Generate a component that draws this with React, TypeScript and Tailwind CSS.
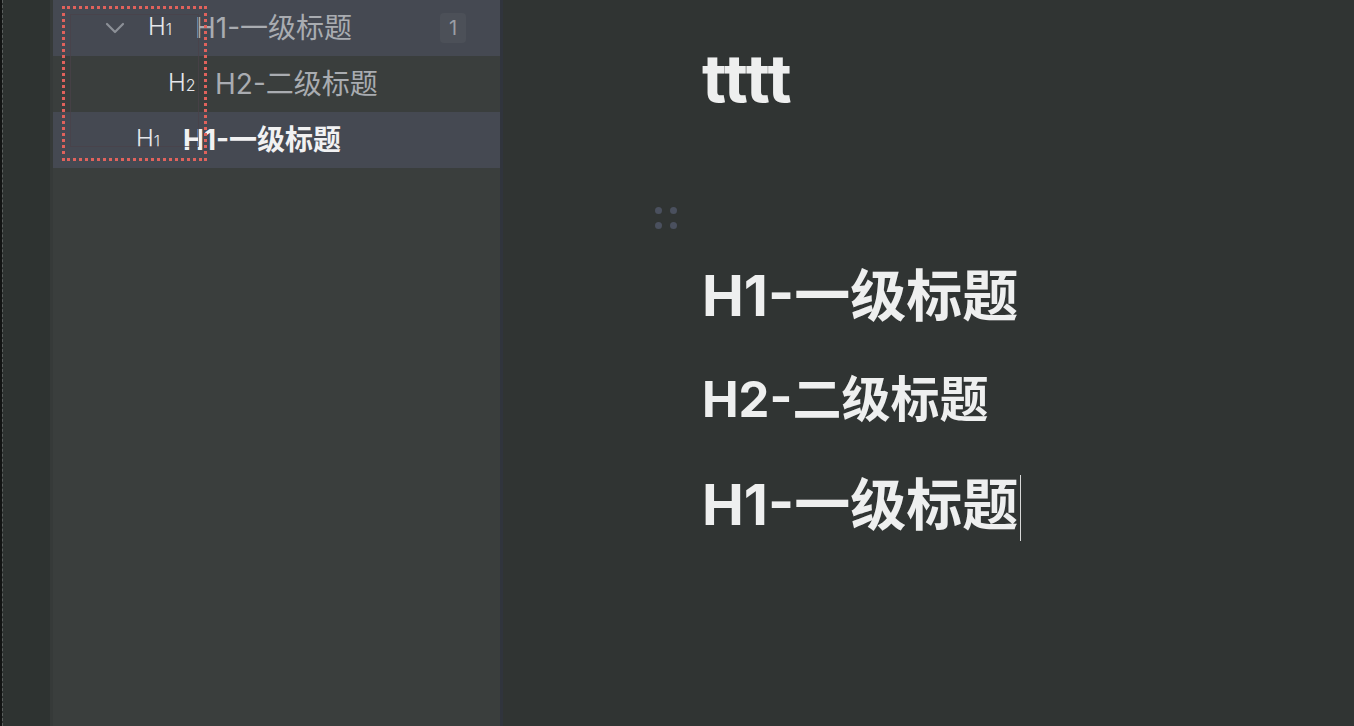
import React from "react";

const font = { fontFamily: 'Inter, "Noto Sans CJK SC", sans-serif' };

function Chevron() {
  return (
    <svg width="20" height="12" viewBox="0 0 20 12" fill="none" className="text-[#8c9097]">
      <path d="M2 2 L10 10 L18 2" stroke="currentColor" strokeWidth="2.2" strokeLinecap="round" strokeLinejoin="round" />
    </svg>
  );
}

function Level({ n }: { n: number }) {
  return (
    <span className="inline-flex items-baseline text-[#e6e7ea] font-light leading-none">
      <span className="text-[24px]">H</span>
      <span className="text-[16px]">{n}</span>
    </span>
  );
}

function OutlineRow({ level, label, pad, active, bold, caret, count }: any) {
  return (
    <div className={`flex items-center h-14 pr-[34px] ${active ? "bg-[#454952]" : ""}`}>
      <div className="flex items-center" style={{ paddingLeft: pad }}>
        {caret && (
          <span className="w-[43px] flex items-center">
            <Chevron />
          </span>
        )}
        <span className="w-[47px]">
          <Level n={level} />
        </span>
        <span className={`text-[28px] leading-none ${bold ? "font-bold text-[#f1f1f2]" : "text-[#a9acb1]"}`}>{label}</span>
      </div>
      {count && (
        <span className="ml-auto w-[26px] h-[30px] rounded bg-[#4c5058] flex items-center justify-center text-[20px] text-[#9a9ea5]">
          {count}
        </span>
      )}
    </div>
  );
}

export default function App() {
  return (
    <div className="flex h-[726px] w-full overflow-hidden bg-[#303433]" style={font}>
      <div className="w-[50px] flex shrink-0 bg-[#2e3331]">
        <div className="w-[2px] bg-[#121413]" />
        <div className="w-[3px] border-l border-dashed border-[#777b7a] opacity-60" />
      </div>

      <aside className="relative w-[453px] shrink-0 flex bg-[#3a3e3d] border-l-[3px] border-[#363a39]">
        <div className="flex-1 flex flex-col">
          <OutlineRow level={1} label="H1-一级标题" pad={52} active caret count="1" />
          <OutlineRow level={2} label="H2-二级标题" pad={115} />
          <OutlineRow level={1} label="H1-一级标题" pad={83} active bold />
        </div>
        <div className="w-[3px] bg-[#30343d]" />
        <div className="absolute left-[9px] top-[6px] w-[145px] h-[155px] border-[3px] border-dotted border-[#e0625c]">
          <div className="m-[5px] h-[133px] border border-[#4a4248] opacity-70" />
        </div>
      </aside>

      <main className="relative flex-1 pl-[199px] pt-[45px] text-[#eeefef]">
        <h1 className="text-[66px] font-bold leading-none">tttt</h1>
        <div className="absolute left-[152px] top-[207px] grid grid-cols-2 gap-[8px]">
          <span className="w-[7px] h-[7px] rounded-full bg-[#4a505e]" />
          <span className="w-[7px] h-[7px] rounded-full bg-[#4a505e]" />
          <span className="w-[7px] h-[7px] rounded-full bg-[#4a505e]" />
          <span className="w-[7px] h-[7px] rounded-full bg-[#4a505e]" />
        </div>
        <h2 className="mt-[157px] text-[56px] font-bold leading-none">H1-一级标题</h2>
        <h3 className="mt-[51px] text-[49px] font-bold leading-none">H2-二级标题</h3>
        <h2 className="mt-[51px] text-[56px] font-bold leading-none flex items-end">
          H1-一级标题
          <span className="inline-block w-px h-[66px] bg-[#d8d8d8] ml-[2px] -mb-[8px]" />
        </h2>
      </main>
    </div>
  );
}
